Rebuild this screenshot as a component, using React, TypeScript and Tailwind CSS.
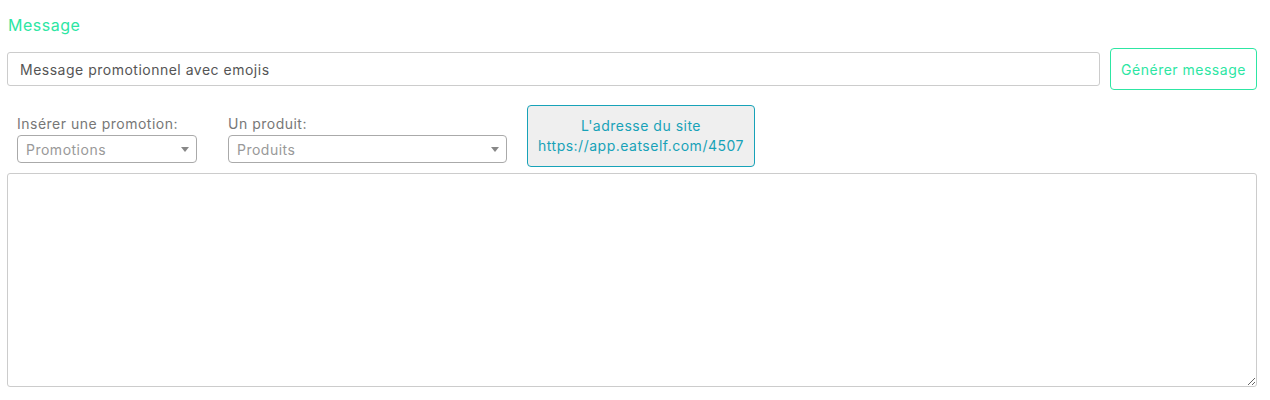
export default function App() {
  return (
    <div className="bg-white w-[1270px] h-[400px] font-['Inter',sans-serif] text-[14px] tracking-[0.5px]">
      <div className="pl-[7px] pr-[13px] pt-[15px]">
        {/* titre */}
        <div className="pl-px text-[16px] leading-[20px] text-[#2de6a3]">Message</div>

        {/* ligne message + bouton */}
        <div className="flex items-center gap-[10px] mt-[13px]">
          <input
            defaultValue="Message promotionnel avec emojis"
            className="flex-1 h-[34px] border border-[#cccccc] rounded-[3px] px-[12px] text-[#555555] tracking-[0.5px] outline-none"
          />
          <button className="h-[42px] w-[147px] border border-[#2de6a3] rounded-[4px] text-[#2de6a3] bg-white tracking-[0.5px]">
            Générer message
          </button>
        </div>

        {/* insertions */}
        <div className="flex items-end gap-[31px] mt-[15px] pl-[10px]">
          <div className="flex flex-col mb-[4px]">
            <label className="text-[#777777] leading-[18px] mb-[2px]">Insérer une promotion:</label>
            <Select placeholder="Promotions" width="w-[180px]" />
          </div>
          <div className="flex flex-col mb-[4px]">
            <label className="text-[#777777] leading-[18px] mb-[2px]">Un produit:</label>
            <Select placeholder="Produits" width="w-[279px]" />
          </div>
          <button className="-ml-[11px] w-[228px] h-[62px] bg-[#efefef] border border-[#17a2b8] rounded-[4px] text-[#17a2b8] leading-[20px] tracking-[0.5px]">
            L'adresse du site
            <br />
            https://app.eatself.com/4507
          </button>
        </div>

        <textarea className="block mt-[6px] w-full h-[214px] border border-[#cccccc] rounded-[3px] outline-none" />
      </div>
    </div>
  )
}

function Select({ placeholder, width }: { placeholder: string; width: string }) {
  return (
    <div className={`${width} h-[28px] border border-[#aaaaaa] rounded-[4px] flex items-center justify-between pl-[8px] pr-[7px]`}>
      <span className="text-[#999999]">{placeholder}</span>
      <svg width="8" height="5" viewBox="0 0 8 5">
        <path d="M0 0h8L4 5z" fill="#888888" />
      </svg>
    </div>
  )
}
